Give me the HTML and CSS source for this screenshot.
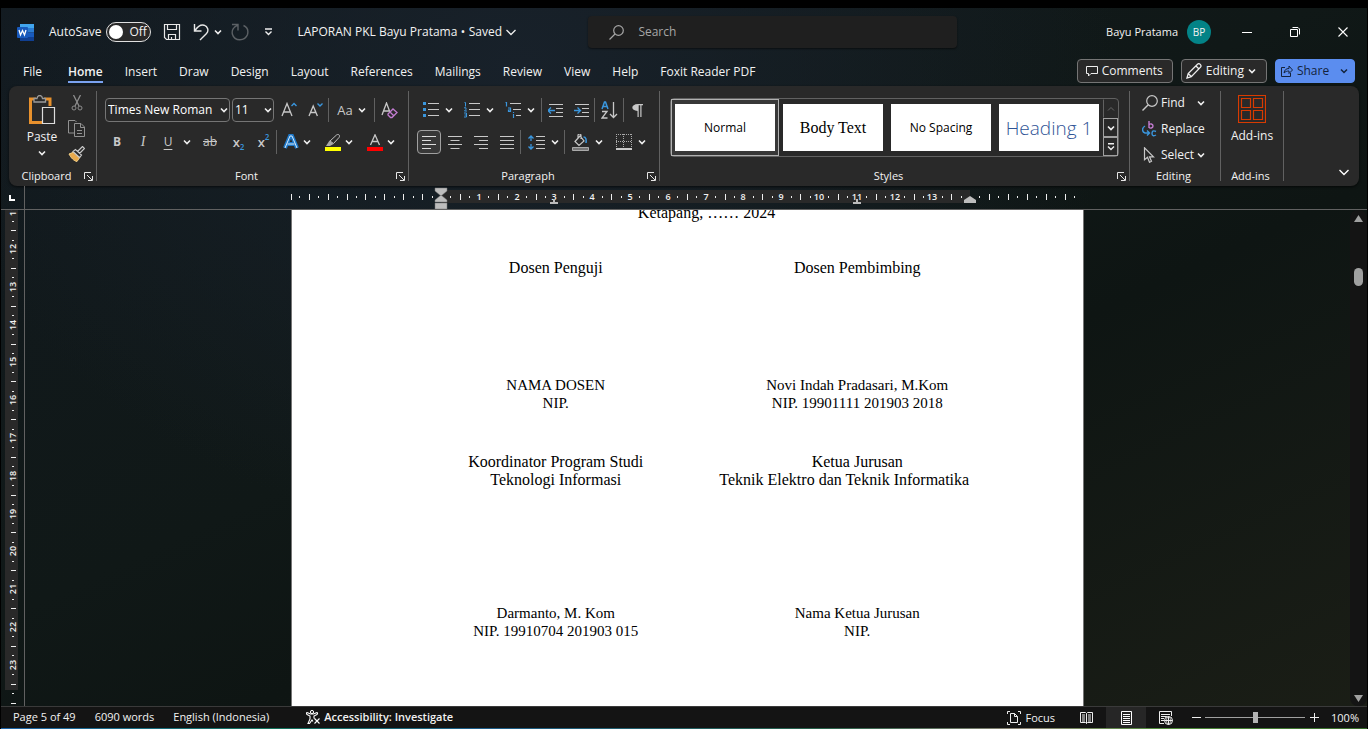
FILE: index.html
```
<!DOCTYPE html>
<html lang="en">
<head>
<meta charset="utf-8">
<title>LAPORAN PKL Bayu Pratama</title>
<link rel="stylesheet" href="styles.css">
</head>
<body>
<svg class="defs" width="0" height="0">
  <symbol id="chev" viewBox="0 0 8 8"><path d="M1 2.500 4 5.500 7 2.500" fill="none" stroke="#f0f0f0" stroke-width="1.600"/></symbol>
  <symbol id="launch" viewBox="0 0 9 9"><path d="M.5 7V.5H7M3 3l5 5M8.500 4v4.500H4" fill="none" stroke="#e6e6e6"/></symbol>
</svg>
<div class="app">
  <header class="title-bar">
    <div class="quick">
      <svg class="word-logo" width="17" height="17" viewBox="0 0 17 17"><path d="M3 0h14v4H3z" fill="#41a5ee"/><path d="M3 4h14v4.500H3z" fill="#2b7cd3"/><path d="M3 8.500h14V13H3z" fill="#185abd"/><path d="M3 13h14v4H3z" fill="#103f91"/><rect y="3" width="11" height="11" rx="1" fill="#185abd"/><path d="m2 6 1.500 5L5.500 6.500l2 4.500L9 6" fill="none" stroke="#fff" stroke-width="1.300"/></svg>
      <label class="autosave"><span>AutoSave</span><input type="checkbox"><span class="toggle"><i></i>Off</span></label>
      <button class="save" aria-label="Save"><svg width="18" height="18" viewBox="0 0 18 18"><path d="M1.500 1.500h15v15H3.500l-2-2zM4.500 1.500v5h9v-5M5.500 16.500v-5h7v5M8.500 16.500v-2.500" fill="none" stroke="#e8e8e8" stroke-width="1.200"/></svg></button>
      <button class="undo" aria-label="Undo"><svg width="16" height="18" viewBox="0 0 16 18"><path d="M1.500 1v7h7M2 7.500C5 3 8 1.500 11 2.200c4 1.300 5 5.500 2.500 8.300L7 17" fill="none" stroke="#e8e8e8" stroke-width="1.400"/></svg></button>
      <button class="undo-more" aria-label="Undo list"><svg width="8" height="8"><use href="#chev"/></svg></button>
      <button class="redo" aria-label="Redo"><svg width="18" height="18" viewBox="0 0 18 18"><path d="M1 1.500h6v6M7 2C2 4 .5 8 1.500 11.500c2 7 12.500 7 15 0C17.500 7.500 16 4 12.500 2.500" fill="none" stroke="#5c6165" stroke-width="1.400"/></svg></button>
      <button class="qat" aria-label="Customize toolbar"><svg width="9" height="8" viewBox="0 0 9 8"><path d="M1 1h7M1.500 3.500l3 3 3-3" fill="none" stroke="#eee" stroke-width="1.400"/></svg></button>
      <button class="doc-name">LAPORAN PKL Bayu Pratama <b>•</b> Saved <svg width="10" height="7" viewBox="0 0 10 7"><path d="M.5 1 5 5.500 9.500 1" fill="none" stroke="#eee" stroke-width="1.300"/></svg></button>
    </div>
    <div class="search">
      <svg width="15" height="15" viewBox="0 0 15 15"><circle cx="9.500" cy="5.500" r="4.800" fill="none" stroke="#a6a6a6" stroke-width="1.200"/><path d="M6 9 .5 14.500" stroke="#a6a6a6" stroke-width="1.300"/></svg>
      <input type="text" placeholder="Search" aria-label="Search">
    </div>
    <div class="window">
      <span class="user">Bayu Pratama</span><button class="avatar">BP</button>
      <button class="win" aria-label="Minimize"><svg width="10" height="10"><path d="M0 5.500h10" stroke="#fff"/></svg></button>
      <button class="win" aria-label="Restore"><svg width="10" height="10" viewBox="0 0 10 10"><path d="M.5 2.500h7v7h-7zM2.500.5H8L9.500 2v5.500" fill="none" stroke="#fff"/></svg></button>
      <button class="win" aria-label="Close"><svg width="10" height="10" viewBox="0 0 10 10"><path d="M.5.5l9 9M9.500.5l-9 9" stroke="#fff" stroke-width="1.100"/></svg></button>
    </div>
  </header>
  <nav class="tabs">
    <button class="file">File</button><button class="active">Home</button><button>Insert</button><button>Draw</button><button>Design</button><button>Layout</button><button>References</button><button>Mailings</button><button>Review</button><button>View</button><button>Help</button><button>Foxit Reader PDF</button>
    <div class="tab-actions">
      <button class="boxed"><svg width="12" height="11" viewBox="0 0 12 11"><path d="M.5.5h11v7H5L2.500 10V7.500h-2z" fill="none" stroke="#eee"/></svg>Comments</button>
      <button class="boxed pen"><svg width="16" height="16" viewBox="0 0 16 16"><path d="M1 15l1.200-4.500L11.500 1.200c1.800-1.500 4.500 1 3 3L5.300 13.600zM10 3l3 3M2.200 10.500l3 3" fill="none" stroke="#eee" stroke-width="1.300"/></svg>Editing<svg width="8" height="8"><use href="#chev"/></svg></button>
      <button class="boxed share"><svg width="12" height="12" viewBox="0 0 12 12"><path d="M4 2.500H.5v9h9V8M3 8c.5-3 2-4.500 5-4.500V1l3.500 4L8 8.500V6C6 6 4.500 6.500 3 8z" fill="none" stroke="#14233c"/></svg>Share<svg class="share-more" width="8" height="8" viewBox="0 0 8 8"><path d="M1 2.500 4 5.500 7 2.500" fill="none" stroke="#14233c" stroke-width="1.500"/></svg></button>
    </div>
  </nav>

  <section class="ribbon">
    <div class="group clipboard">
      <div class="group-body clip-body">
        <button class="big"><svg width="28" height="30" viewBox="0 0 28 30"><path d="M7 4H1.500v23.500H13M15 4h6v7" transform="translate(1 0)" fill="none" stroke="#e8912d" stroke-width="3"/><path d="M6 7V3.500h3c.5-4 5-4 5.500 0h3V7z" fill="#292929" stroke="#9b9b9b" stroke-width="1.300"/><path d="M14.500 12.500h12v16h-12z" fill="#292929" stroke="#ddd" stroke-width="1.200"/></svg>Paste<svg width="8" height="8"><use href="#chev"/></svg></button>
        <div class="clip-tools">
          <button aria-label="Cut"><svg width="12" height="16" viewBox="0 0 12 16"><path d="M2.500 0 8 11M9.500 0 4 11" stroke="#8d8d8d" stroke-width="1.300"/><circle cx="3" cy="13" r="2" fill="none" stroke="#8d8d8d"/><circle cx="9" cy="13" r="2" fill="none" stroke="#8d8d8d"/></svg></button>
          <button aria-label="Copy"><svg width="17" height="17" viewBox="0 0 17 17"><path d="M6 13H.5V.5H7L8.500 2M6.500 3.500H13L16.500 7v9.500h-10zM12.500 3.500v4h4M9 10.500h5M9 13.500h5" fill="none" stroke="#929292"/></svg></button>
          <button aria-label="Format painter"><svg width="17" height="16" viewBox="0 0 17 16"><path d="M1 8l5-2 6 5-3 4.500C6 15 3 12 1 8z" fill="#e9a94b" stroke="#f2cf86"/><path d="M5 5.500 7.500 3.500l6 5.500-2 2.500zM9.500 5.500 14.500.5l2 2-5 5" fill="#292929" stroke="#c8c8c8" stroke-width="1.200"/></svg></button>
        </div>
      </div>
      <div class="group-label"><span>Clipboard</span><button aria-label="Clipboard options"><svg width="9" height="9"><use href="#launch"/></svg></button></div>
    </div>

    <div class="group font">
      <div class="group-body">
        <div class="row first">
          <div class="combo family"><select aria-label="Font"><option>Times New Roman</option></select><svg width="8" height="8"><use href="#chev"/></svg></div>
          <div class="combo size"><select aria-label="Font size"><option>11</option></select><svg width="8" height="8"><use href="#chev"/></svg></div>
          <button class="ico" aria-label="Grow font"><svg width="16" height="16" viewBox="0 0 16 16"><path d="M1 14 6 1.500l5 12.500M3 10h6" fill="none" stroke="#c8c8c8" stroke-width="1.300"/><path d="M10.500 4 13 1.500 15.500 4" fill="none" stroke="#3a96dd" stroke-width="1.400"/></svg></button>
          <button class="ico" aria-label="Shrink font"><svg width="16" height="16" viewBox="0 0 16 16"><path d="M2 14 6.200 4l4.200 10M4 10.500h5" fill="none" stroke="#c8c8c8" stroke-width="1.300"/><path d="M10.500 1.500 13 4l2.500-2.500" fill="none" stroke="#3a96dd" stroke-width="1.400"/></svg></button>
          <i class="sep"></i>
          <button class="case">Aa<svg width="8" height="8"><use href="#chev"/></svg></button>
          <i class="sep"></i>
          <button class="ico clear" aria-label="Clear formatting"><svg width="17" height="17" viewBox="0 0 17 17"><path d="M1 13 5.500 1 10 13M3 9h5" fill="none" stroke="#c8c8c8" stroke-width="1.300"/><path d="m7 12 5-5 4 3.500-5 5H9.500L7 13zM9 10l4 4" fill="#292929" stroke="#c27bd0" stroke-width="1.300"/></svg></button>
        </div>
        <div class="row second">
          <button class="ico bold">B</button><button class="ico italic">I</button><button class="ico under">U</button><button class="mini" aria-label="Underline style"><svg width="8" height="8"><use href="#chev"/></svg></button><button class="ico strike">ab</button><button class="ico script">x<sub>2</sub></button><button class="ico script">x<sup>2</sup></button>
          <i class="sep"></i>
          <button class="split" aria-label="Text effects"><svg width="16" height="16" viewBox="0 0 16 16"><path d="M2 14 7 2h2l5 12M4.500 10h7" fill="none" stroke="#1e78c8" stroke-width="4"/><path d="M2 14 7 2h2l5 12M4.500 10h7" fill="none" stroke="#d7ebfb" stroke-width="1"/></svg><svg width="8" height="8"><use href="#chev"/></svg></button>
          <button class="split" aria-label="Highlight"><svg width="16" height="17" viewBox="0 0 16 17"><path d="M0 13h16v4H0z" fill="#ff0"/><path d="M5 7l6.500-6c2-1.500 4 .5 2.500 2.500L8.500 9.500z" fill="none" stroke="#bdbdbd"/><path d="M4.500 6.500 8.500 10 5 12H1z" fill="#a8a8a8"/></svg><svg width="8" height="8"><use href="#chev"/></svg></button>
          <button class="split" aria-label="Font color"><svg width="16" height="17" viewBox="0 0 16 17"><path d="M0 13h16v4H0z" fill="#f00"/><path d="M3.500 11 8 .8 12.500 11M5 7.500h6" fill="none" stroke="#c8c8c8" stroke-width="1.300"/></svg><svg width="8" height="8"><use href="#chev"/></svg></button>
        </div>
      </div>
      <div class="group-label"><span>Font</span><button aria-label="Font options"><svg width="9" height="9"><use href="#launch"/></svg></button></div>
    </div>

    <div class="group paragraph">
      <div class="group-body">
        <div class="row first">
          <button class="list" aria-label="Bullets"><svg width="16" height="16" viewBox="0 0 16 16"><path d="M0 0h3v3H0zM0 6h3v3H0zM0 12h3v3H0z" fill="#3a96dd"/><path d="M5 1.500h11M5 7.500h11M5 13.500h11" stroke="#c8c8c8"/></svg><svg width="8" height="8"><use href="#chev"/></svg></button>
          <button class="list" aria-label="Numbering"><svg width="16" height="16" viewBox="0 0 16 16"><path d="M5 1.500h11M5 7.500h11M5 13.500h11" stroke="#c8c8c8"/><path d="M.5.5h1v4M0 5.800h2v1.500L.5 9H3M0 11h2.500v4H0M.5 13h2" fill="none" stroke="#3a96dd"/></svg><svg width="8" height="8"><use href="#chev"/></svg></button>
          <button class="list" aria-label="Multilevel list"><svg width="16" height="16" viewBox="0 0 16 16"><path d="M5 1.500h11M8 7.500h8M11 13.500h5" stroke="#c8c8c8"/><path d="M.5.5h1v4M3 6h2.500v3.500h-2V8h2M8.500 12v4M8.500 10v1" fill="none" stroke="#3a96dd" stroke-width="1.200"/></svg><svg width="8" height="8"><use href="#chev"/></svg></button>
          <i class="sep"></i>
          <button class="ico" aria-label="Decrease indent"><svg width="15" height="15" viewBox="0 0 15 15"><path d="M1 1.500h14M8 5.500h7M8 9.500h7M1 13.500h14" stroke="#c8c8c8"/><path d="M0 7.500h7M3 4.500l-3 3 3 3" fill="none" stroke="#3a96dd" stroke-width="1.300"/></svg></button>
          <button class="ico" aria-label="Increase indent"><svg width="15" height="15" viewBox="0 0 15 15"><path d="M1 1.500h14M8 5.500h7M8 9.500h7M1 13.500h14" stroke="#c8c8c8"/><path d="M0 7.500h6M3.500 4.500l3 3-3 3" fill="none" stroke="#3a96dd" stroke-width="1.300"/></svg></button>
          <i class="sep"></i>
          <button class="ico sort" aria-label="Sort"><svg width="17" height="18" viewBox="0 0 17 18"><path d="M1 8 3.500 1h1L7 8M2 5.500h4" fill="none" stroke="#3a96dd" stroke-width="1.500"/><path d="M1 10.500h5L1 17h5.500M12.500 1v15.500M9 13l3.500 3.500L16 13" fill="none" stroke="#c8c8c8" stroke-width="1.300"/></svg></button>
          <i class="sep"></i>
          <button class="ico" aria-label="Show marks"><svg width="11" height="13" viewBox="0 0 11 13"><path d="M6 0h5v1.200H9.500V13H8.300V1.200H6.700V13H5.500V7C-1.500 7-1.500 0 6 0z" fill="#c8c8c8"/></svg></button>
        </div>
        <div class="row second">
          <button class="ico selected" aria-label="Align left"><svg width="14" height="14" viewBox="0 0 14 14"><path d="M0 1.500h14M0 5.500h9M0 9.500h14M0 13.500h9" stroke="#ddd"/></svg></button>
          <button class="ico" aria-label="Center"><svg width="14" height="14" viewBox="0 0 14 14"><path d="M0 1.500h14M2.500 5.500h9M0 9.500h14M2.500 13.500h9" stroke="#c8c8c8"/></svg></button>
          <button class="ico" aria-label="Align right"><svg width="14" height="14" viewBox="0 0 14 14"><path d="M0 1.500h14M5 5.500h9M0 9.500h14M5 13.500h9" stroke="#c8c8c8"/></svg></button>
          <button class="ico" aria-label="Justify"><svg width="14" height="14" viewBox="0 0 14 14"><path d="M0 1.500h14M0 5.500h14M0 9.500h14M0 13.500h14" stroke="#c8c8c8"/></svg></button>
          <i class="sep"></i>
          <button class="list" aria-label="Line spacing"><svg width="17" height="15" viewBox="0 0 17 15"><path d="M8 1.500h9M8 5.500h9M8 9.500h9M8 13.500h9" stroke="#c8c8c8"/><path d="M3 1v5M.5 3.500 3 1l2.500 2.500M3 9v5M.5 11.500 3 14l2.500-2.500" fill="none" stroke="#3a96dd" stroke-width="1.300"/></svg><svg width="8" height="8"><use href="#chev"/></svg></button>
          <i class="sep"></i>
          <button class="list" aria-label="Shading"><svg width="17" height="17" viewBox="0 0 17 17"><path d="M.5 13.500h16v3H.5z" fill="#777" stroke="#aaa"/><path d="M3 7.500 8 2l4 5-5 4.500zM6 4V1.500c0-2 3-2 3 0V5" fill="none" stroke="#c8c8c8" stroke-width="1.200"/><path d="M11.500 3c2.500 0 3 2.500 2.500 6" fill="none" stroke="#3a96dd" stroke-width="1.500"/></svg><svg width="8" height="8"><use href="#chev"/></svg></button>
          <button class="list" aria-label="Borders"><svg width="16" height="16" viewBox="0 0 16 16"><path d="M.5 0v14M15.500 0v14M7.500 0v14M0 .5h16M0 7.500h16" stroke="#aaa" stroke-dasharray="1 1"/><path d="M0 15h16" stroke="#fff" stroke-width="1.500"/></svg><svg width="8" height="8"><use href="#chev"/></svg></button>
        </div>
      </div>
      <div class="group-label"><span>Paragraph</span><button aria-label="Paragraph options"><svg width="9" height="9"><use href="#launch"/></svg></button></div>
    </div>

    <div class="group styles">
      <div class="group-body">
        <div class="gallery">
          <button class="style on"><span>Normal</span></button>
          <button class="style"><span class="serif">Body Text</span></button>
          <button class="style"><span>No Spacing</span></button>
          <button class="style"><span class="heading">Heading 1</span></button>
          <div class="scrollers">
            <button class="dim" aria-label="Previous styles"><svg width="8" height="8" viewBox="0 0 8 8"><path d="M1 5.500 4 2.500 7 5.500" fill="none" stroke="#666"/></svg></button>
            <button aria-label="Next styles"><svg width="8" height="8"><use href="#chev"/></svg></button>
            <button aria-label="More styles"><svg width="8" height="8" viewBox="0 0 8 8"><path d="M1 .8h6M1 3.500l3 3 3-3" fill="none" stroke="#eee" stroke-width="1.400"/></svg></button>
          </div>
        </div>
      </div>
      <div class="group-label"><span>Styles</span><button aria-label="Styles options"><svg width="9" height="9"><use href="#launch"/></svg></button></div>
    </div>

    <div class="group editing">
      <div class="group-body edit-body">
        <button><svg width="16" height="16" viewBox="0 0 16 16"><circle cx="10" cy="6" r="5.300" fill="none" stroke="#c8c8c8" stroke-width="1.200"/><path d="M6 10 .5 15.500" stroke="#c8c8c8" stroke-width="1.400"/></svg>Find<svg class="find-more" width="8" height="8"><use href="#chev"/></svg></button>
        <button><svg width="16" height="16" viewBox="0 0 16 16"><path d="M7 0v7M7 4c1-2 4-1 4 1s-3 3-4 1" fill="none" stroke="#c27bd0" stroke-width="1.400"/><path d="M3 5C-.5 7 0 11 3 12h4M5 9.500 7.500 12 5 14.500M14 10.500c-3-1.500-4 0-4 2s1.500 3 4 1.500" fill="none" stroke="#3a96dd" stroke-width="1.400"/></svg>Replace</button>
        <button><svg width="16" height="16" viewBox="0 0 16 16"><path d="M2.500.8v12l3-2.500 2 5 2-1-2-4.500h4z" fill="none" stroke="#c8c8c8" stroke-width="1.200"/></svg>Select<svg width="8" height="8"><use href="#chev"/></svg></button>
      </div>
      <div class="group-label"><span>Editing</span></div>
    </div>

    <div class="group addins">
      <div class="group-body">
        <button class="big"><svg width="28" height="28" viewBox="0 0 28 28"><path d="M.5.5h27v27H.5zM3.500 3.500h9v9h-9zM15.500 3.500h9v9h-9zM3.500 15.500h9v9h-9zM15.500 15.500h9v9h-9z" fill="none" stroke="#d83b01" stroke-width="1.200"/></svg>Add-ins</button>
      </div>
      <div class="group-label"><span>Add-ins</span></div>
    </div>
    <button class="collapse" aria-label="Collapse ribbon"><svg width="10" height="7" viewBox="0 0 10 7"><path d="M.5 1 5 5.500 9.500 1" fill="none" stroke="#fff" stroke-width="1.400"/></svg></button>
  </section>

  <div class="ruler-bar">
    <div class="corner"><svg width="6" height="6"><path d="M1 0v5h5" fill="none" stroke="#fff" stroke-width="2"/></svg></div>
    <div class="ruler-area"><svg id="hruler" class="ruler" width="793" height="23"></svg></div>
  </div>
  <main class="work">
    <div class="side"><svg id="vruler" class="ruler" width="24" height="496"></svg></div>
    <div class="canvas">
      <article class="page">
        <p class="place">Ketapang, …… 2024</p>
        <div class="signers">
          <p>Dosen Penguji</p><p>Dosen Pembimbing</p>
        </div>
        <div class="signers names">
          <p>NAMA DOSEN<br>NIP.</p><p>Novi Indah Pradasari, M.Kom<br>NIP. 19901111 201903 2018</p>
        </div>
        <div class="signers roles">
          <p>Koordinator Program Studi<br>Teknologi Informasi</p><p>Ketua Jurusan<span class="dept">Teknik Elektro dan Teknik Informatika</span></p>
        </div>
        <div class="signers names heads">
          <p>Darmanto, M. Kom<br>NIP. 19910704 201903 015</p><p>Nama Ketua Jurusan<br>NIP.</p>
        </div>
      </article>
    </div>
    <div class="scrollbar">
      <svg width="9" height="8"><path d="M4.500 0 9 7H0z" fill="#a0a0a0"/></svg>
      <i></i>
      <svg class="down" width="9" height="8"><path d="M0 1h9L4.500 8z" fill="#a0a0a0"/></svg>
    </div>
  </main>

  <footer class="status">
    <button>Page 5 of 49</button><button>6090 words</button><button>English (Indonesia)</button>
    <button class="access"><svg width="14" height="14" viewBox="0 0 14 14"><circle cx="6" cy="2" r="1.600" fill="none" stroke="#fff"/><path d="M1 2.500C0 3 .5 4.500 1.500 4.800L4 6v3L2 13.500h1.500L6 10l1 1.500M11 2.500c1 .5.500 2-.5 2.300L8 6v2.500M1 2.500 4.500 4h3L11 2.500M8.500 8.500l5 5M13.500 8.500l-5 5" fill="none" stroke="#fff" stroke-width="1.100"/></svg>Accessibility: Investigate</button>
    <div class="views">
      <button class="focus"><svg width="14" height="14" viewBox="0 0 14 14"><path d="M3 .5H.5V3M11 .5h2.500V3M3 13.500H.5V11M11 13.500h2.500V11M3.500 2.500h4l3 3v6h-7zM7.500 2.500v3h3" fill="none" stroke="#eee"/></svg>Focus</button>
      <button class="view" aria-label="Read mode"><svg width="13" height="12" viewBox="0 0 13 12"><path d="M.5.5h5l1 1 1-1h5v10h-5l-1 1-1-1h-5zM6.500 1.500v10M2 3h3M2 5h3M2 7h3M2 9h3M8 3h3M8 5h3M8 7h3M8 9h3" fill="none" stroke="#eee"/></svg></button>
      <button class="view current" aria-label="Print layout"><svg width="11" height="14" viewBox="0 0 11 14"><path d="M.5.5h10v13H.5zM2 3.500h7M2 5.500h7M2 7.500h7M2 9.500h7M2 11.500h7" fill="none" stroke="#fff"/></svg></button>
      <button class="view" aria-label="Web layout"><svg width="14" height="14" viewBox="0 0 14 14"><path d="M5 12.500H.5V.5h12V5M2 3.500h9M2 5.500h6M2 7.500h3M2 9.500h3" fill="none" stroke="#eee"/><circle cx="9.500" cy="9.500" r="4" fill="#141414" stroke="#eee"/><path d="M5.500 9.500h8M9.500 5.500v8" stroke="#eee"/><ellipse cx="9.500" cy="9.500" rx="2" ry="4" fill="none" stroke="#eee" stroke-width=".7"/></svg></button>
      <button class="zoom" aria-label="Zoom out"><svg width="9" height="9"><path d="M0 4.500h9" stroke="#eee"/></svg></button>
      <input type="range" min="10" max="190" value="100" aria-label="Zoom">
      <button class="zoom" aria-label="Zoom in"><svg width="9" height="9"><path d="M0 4.500h9M4.500 0v9" stroke="#eee"/></svg></button>
      <button class="percent">100%</button>
    </div>
  </footer>
  <div class="desktop-edge"></div>
</div>
<script src="rulers.js"></script>
</body>
</html>
```
FILE: styles.css
```
* { box-sizing: border-box; }
body { margin: 0; background: #000; color: #f2f2f2; font: 12px/16px "Open Sans", "Noto Sans", sans-serif; }
button { display: flex; align-items: center; justify-content: center; padding: 0; border: 0; background: none; color: inherit; font: inherit; white-space: nowrap; }
svg { display: block; flex: none; }
p { margin: 0; }
.defs { position: absolute; }
.app { display: flex; flex-direction: column; height: 100vh; border: solid #000; border-width: 8px 1px 0; background: radial-gradient(ellipse at 38% 8%, #18212a 0, rgba(24, 33, 42, 0) 50%), linear-gradient(155deg, #121a20 0, #101817 45%, #0e1513 60%, #1b1e16 100%); }

.title-bar { display: grid; grid-template-columns: 43% 27% 1fr; align-items: center; height: 48px; }
.quick { display: flex; align-items: center; padding-left: 16px; }
.autosave { display: flex; align-items: center; gap: 5px; margin-left: 15px; }
.autosave input { position: absolute; opacity: 0; }
.toggle { display: flex; align-items: center; gap: 6px; width: 45px; height: 20px; padding: 0 2px; border: 1px solid #e0e0e0; border-radius: 10px; background: #292929; }
.toggle i { width: 14px; height: 14px; border-radius: 50%; background: #fff; }
.save { margin-left: 12px; }
.undo { margin-left: 12px; }
.undo-more { margin-left: 5px; }
.redo { margin-left: 9px; }
.qat { margin-left: 15px; }
.doc-name { gap: 4px; margin-left: 24px; }
.doc-name b { font-size: 9px; }
.search { display: flex; align-items: center; gap: 12px; height: 32px; padding-left: 21px; border-radius: 4px; background: #1f1f1f; box-shadow: 0 1px 2px #0008; }
.search input { flex: 1; min-width: 0; border: 0; outline: 0; background: none; color: #fff; font: 12px/18px "Open Sans", sans-serif; }
.search input::placeholder { color: #a6a6a6; opacity: 1; }
.window { display: flex; align-items: center; justify-content: flex-end; }
.user { font-size: 11px; }
.avatar { width: 24px; height: 24px; margin: 0 12px 0 9px; border-radius: 50%; background: #038387; font-size: 10px; }
.win { width: 48px; height: 32px; }

.tabs { display: flex; align-items: center; height: 30px; gap: 22px; padding: 0 4px 0 22px; }
.tabs > button { height: 24px; padding-top: 3px; border-bottom: 2px solid transparent; }
.tabs .file { margin-right: 4px; }
.tabs .active { border-color: #7aa2f0; font-weight: 600; }
.tab-actions { display: flex; gap: 8px; margin-left: auto; padding-right: 8px; }
.boxed { gap: 4px; height: 24px; padding: 0 9px 0 8px; border: 1px solid #757575; border-radius: 4px; background: #292929; }
.pen { padding: 0 10px 0 4px; }
.share { width: 80px; border-color: #5b8def; background: #5b8def; color: #14233c; }
.share-more { margin-left: 7px; }

.ribbon { display: flex; height: 100px; margin: 0 8px; padding: 5px 0; border-radius: 8px; background: #292929; box-shadow: 0 1px 3px #000a; }
.group { display: flex; flex-direction: column; flex: none; border-right: 1px solid #616161; }
.group-body { flex: 1; min-height: 0; }
.group-label { display: flex; align-items: center; height: 16px; margin-bottom: -3px; padding-right: 3px; }
.group-label span { flex: 1; text-align: center; font-size: 11px; }
.clipboard { width: 88px; }
.clip-body { display: flex; gap: 12px; padding: 4px 0 0 19px; }
.big { flex-direction: column; }
.clip-body .big { gap: 4px; width: 28px; height: 64px; justify-content: flex-start; }
.clip-tools { display: flex; flex-direction: column; gap: 9px; align-items: center; }
.font { width: 312px; }
.row { display: flex; align-items: center; height: 24px; }
.font .row { padding-left: 7px; }
.font .first { padding-left: 8px; }
.first { margin-top: 7px; }
.second { margin-top: 8px; }
.sep { flex: none; width: 1px; height: 24px; background: #616161; }
.ico { width: 26px; height: 24px; }
.combo { position: relative; height: 24px; margin-right: 2px; }
.combo select { width: 100%; height: 100%; padding: 0 0 0 2px; border: 1px solid #757575; border-radius: 4px; appearance: none; background: none; color: #fff; font: inherit; }
.combo svg { position: absolute; top: 8px; right: 2px; pointer-events: none; }
.family { width: 125px; }
.size { width: 42px; }
.case { gap: 5px; width: 45px; color: #c8c8c8; font-size: 13px; }
.clear { width: 28px; }
.font .second { color: #c8c8c8; }
.bold { font-weight: 700; }
.italic { font: italic 14px "Liberation Serif", serif; }
.under { width: 24px; text-decoration: underline; text-underline-offset: 3px; }
.mini { width: 14px; height: 24px; }
.strike { width: 32px; text-decoration: line-through; }
.script { width: 25px; font-weight: 600; font-size: 13px; }
.script sub, .script sup { color: #3a96dd; font-size: 8px; line-height: 8px; }
.script sub { padding-top: 10px; }
.script sup { padding-bottom: 10px; }
.split { gap: 4px; width: 36px; height: 24px; margin: 0 4px 0 2px; }
.paragraph { width: 251px; }
.paragraph .row { padding-left: 8px; }
.list { gap: 6px; width: 41px; height: 24px; }
.first .list + .sep { margin-left: 1px; }
.second .list { margin-left: 2px; }
.sort { width: 28px; }
.selected { width: 24px; margin-right: 1px; border: 1px solid #a0a0a0; border-radius: 4px; background: #383838; }
.styles { width: 470px; }
.gallery { display: flex; height: 59px; margin: 7px 10px 0; border: 1px solid #616161; border-radius: 4px; }
.style { flex: 1; height: 57px; padding: 4px 3px; color: #000; border: 1px solid transparent; }
.style.on { border-color: #b0b0b0; background: #383838; }
.style span { display: flex; align-items: center; justify-content: center; width: 100%; height: 100%; background: #fff; }
.style .serif { font: 16px "Liberation Serif", serif; }
.style .heading { color: #2f5496; font: 300 19px "Open Sans", sans-serif; }
.scrollers { display: grid; grid-template-rows: repeat(3, 1fr); width: 15px; }
.scrollers button { border: 1px solid #a0a0a0; }
.scrollers .dim { border-color: transparent transparent transparent #616161; }
.editing { width: 91px; }
.edit-body { display: flex; flex-direction: column; gap: 2px; padding: 0 0 0 12px; }
.edit-body button { justify-content: flex-start; gap: 3px; height: 24px; }
.find-more { margin-left: 9px; }
.addins { width: 63px; }
.addins .big { width: 100%; gap: 5px; padding-top: 4px; }
.collapse { align-self: flex-end; margin: 0 10px 5px auto; }

.ruler-bar { display: flex; height: 24px; border-bottom: 1px solid #616161; }
.corner { width: 24px; padding: 9px 0 0 8px; border-right: 1px solid #616161; }
.ruler-area, .canvas { display: flex; flex: 1; justify-content: center; min-width: 0; overflow: hidden; }
.ruler-area { padding-right: 17px; }
.ruler text { fill: #f2f2f2; font: 600 9px "Open Sans", sans-serif; text-anchor: middle; }
.work { display: flex; flex: 1; min-height: 0; }
.side { width: 24px; border-right: 1px solid #616161; overflow: hidden; }
.page { flex: none; width: 793px; padding: 0 75px 0 113px; border: solid #757575; border-width: 0 1px; background: #fff; color: #000; font: 16px/18px "Liberation Serif", "Times New Roman", serif; text-align: center; }
.place { margin-top: -6px; }
.signers { display: grid; grid-template-columns: 1fr 1fr; margin-top: 37px; }
.names { margin-top: 99px; font-size: 15px; }
.roles { margin-top: 41px; }
.heads { margin-top: 115px; }
.dept { display: block; padding-right: 26px; white-space: nowrap; }
.scrollbar { display: flex; flex-direction: column; align-items: center; width: 17px; padding: 5px 0 4px; border-radius: 8px; background: #141414; }
.scrollbar i { width: 9px; height: 18px; margin-top: 45px; border-radius: 5px; background: #a0a0a0; }
.down { margin-top: auto; }

.status { display: flex; align-items: center; gap: 19px; height: 22px; padding: 0 8px 0 12px; border-top: 1px solid #3a3a3a; background: #141414; font-size: 11px; }
.status > button { padding-bottom: 1px; }
.access { gap: 4px; margin-left: 18px; font-weight: 600; }
.views { display: flex; align-items: center; align-self: stretch; margin-left: auto; }
.focus { gap: 4px; margin-right: 11px; }
.view { width: 40px; align-self: stretch; }
.current { background: #262626; }
.zoom { width: 9px; margin: 0 4px 0 5px; }
.view + .zoom { margin-left: 6px; }
.views input { width: 100px; height: 12px; margin: 0; appearance: none; background: linear-gradient(#a0a0a0, #a0a0a0) center / 100% 1px no-repeat; }
.views input::-webkit-slider-thumb { appearance: none; width: 5px; height: 11px; background: #b4b4b4; }
.percent { margin-left: 8px; }
.desktop-edge { height: 1px; background: linear-gradient(90deg, #1c62a8, #12725a 20%, #1c5c8a 35%, #27624a 60%, #8a8272 75%, #4f8a3a 85%, #376b2a); }
```
FILE: rulers.js
```
const CM = 37.8;
const QUARTER = CM / 4;
const bar = (x, y, w, h, c) => `<rect x="${Math.round(x)}" y="${Math.round(y)}" width="${w}" height="${h}" fill="${c}"/>`;
const TICK = "#eee";

function horizontal() {
  const zero = 150, end = 679;
  const dot = (x) => bar(x, 10, 1, 2, TICK);
  const tick = (x) => bar(x, 8, 1, 6, TICK);
  let s = bar(zero, 4, end - zero, 13, "#292929");
  for (let k = 1; k <= 16; k++) {
    const x = Math.max(0, zero - k * QUARTER);
    s += k % 2 ? dot(x) : tick(x);
  }
  for (let k = 1; k < 56; k++) {
    const x = zero + k * QUARTER;
    if (k % 4 === 0) s += `<text x="${Math.round(x)}" y="14">${k / 4}</text>`;
    else s += k % 2 ? dot(x) : tick(x);
  }
  for (let k = 1; k < 12; k++) {
    const x = end + k * QUARTER;
    s += k % 2 ? dot(x) : tick(x);
  }
  for (const x of [263, 566]) s += bar(x - 4, 16, 8, 2, "#bbb") + bar(x - 1, 13, 2, 3, "#bbb");
  s += `<path d="M144 2h12v3l-6 5-6-5zM144 16v-2l6-5 6 5v2z M144 17h12v6h-12z" fill="#bdbdbd" stroke="#777" stroke-width=".5"/>`;
  s += `<path d="M673 17v-3l6-4 6 4v3z" fill="#bdbdbd"/>`;
  document.getElementById("hruler").innerHTML = s;
}

function vertical() {
  const dot = (y) => bar(11, y, 2, 1, TICK);
  const tick = (y) => bar(10, y, 5, 1, TICK);
  let s = bar(4, 0, 13, 480, "#292929");
  for (let n = 11; n <= 23; n++) {
    const y = 39 + (n - 12) * CM;
    s += `<text transform="translate(15 ${Math.round(y)}) rotate(-90)">${n}</text>`;
    s += dot(y + QUARTER) + tick(y + 2 * QUARTER);
    if (n < 23) s += dot(y + 3 * QUARTER);
  }
  s += dot(483) + tick(493);
  document.getElementById("vruler").innerHTML = s;
}

horizontal();
vertical();
```
